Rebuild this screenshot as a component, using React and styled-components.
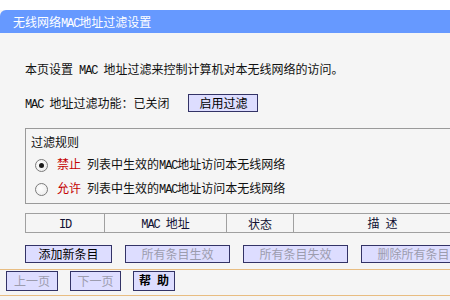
import React from "react";
import styled, { createGlobalStyle } from "styled-components";

const GlobalStyle = createGlobalStyle`
  html, body { margin: 0; padding: 0; background: #f5f5f5; overflow: hidden; }
  body {
    font-family: "Noto Sans CJK SC", "Noto Sans", sans-serif;
    font-size: 12px;
    color: #111;
  }
`;

const Page = styled.div`
  width: 450px;
  overflow: hidden;
  border-top: 10px solid #ffffff;
  background: #f5f5f5;
`;

const TitleBar = styled.div`
  height: 23px;
  line-height: 23px;
  background: #6699ff;
  border-top-left-radius: 6px;
  color: #ffffff;
  padding-left: 13px;
  font-size: 12px;
`;

const Latin = styled.span`
  font-family: "Liberation Mono", monospace;
  font-size: 12px;
  letter-spacing: -1.1px;
  white-space: pre;
`;

const Content = styled.div`
  padding: 26px 0 0 25px;
`;

const Intro = styled.div`
  line-height: 20px;
  white-space: nowrap;
`;

const FilterRow = styled.div`
  display: flex;
  align-items: center;
  height: 19px;
  margin-top: 12px;
  gap: 19px;
  white-space: nowrap;
`;

const Button = styled.button`
  box-sizing: border-box;
  height: ${(p) => p.$h || 18}px;
  width: ${(p) => p.$w}px;
  padding: 0;
  flex: none;
  font-family: "Noto Sans CJK SC", sans-serif;
  font-size: 12px;
  font-weight: ${(p) => (p.$bold ? 700 : 400)};
  line-height: 16px;
  background: #ddddff;
  border: 1px solid #333366;
  border-radius: 0;
  color: ${(p) => (p.disabled ? "#9c9cae" : "#000")};
  white-space: pre;
`;

const RuleBox = styled.div`
  width: 460px;
  margin-top: 16px;
  border: 1px solid #9a9a9a;
  border-right: none;
  padding: 2px 0;
`;

const Legend = styled.div`
  line-height: 22px;
  padding-left: 5px;
`;

const RadioRow = styled.div`
  height: 24px;
  display: flex;
  align-items: center;
  padding-left: 9px;
  white-space: nowrap;
`;

const RadioCircle = styled.span`
  box-sizing: border-box;
  flex: none;
  width: 13px;
  height: 13px;
  border-radius: 50%;
  border: 1px solid #7b7b7b;
  background: radial-gradient(circle at 40% 40%, #ffffff 0%, #e8e8e8 100%);
  margin-right: 9px;
  display: flex;
  align-items: center;
  justify-content: center;
  &::after {
    content: "";
    display: ${(p) => (p.$checked ? "block" : "none")};
    width: 5px;
    height: 5px;
    border-radius: 50%;
    background: #1a1a1a;
  }
`;

const RadioText = styled.span`
  line-height: 20px;
`;

const Red = styled.span`
  color: #c40000;
  margin-right: 6px;
`;

const Table = styled.table`
  margin-top: 9px;
  border-collapse: collapse;
  table-layout: fixed;
  width: 446px;
`;

const Th = styled.th`
  height: 17px;
  padding: 0;
  border: 1px solid #a0a0a0;
  font-weight: 400;
  font-size: 12px;
  color: #111133;
  text-align: center;
  white-space: pre;
`;

const ButtonRow = styled.div`
  display: flex;
  gap: 13px;
  margin-top: 12px;
`;

const Footer = styled.div`
  margin-top: 6px;
  border-top: 1px solid #e8bd82;
  border-bottom: 1px solid #e8bd82;
  padding: 1px 0 4px 6px;
  display: flex;
  gap: 12px;
`;

export default function App() {
  return (
    <>
      <GlobalStyle />
      <Page>
        <TitleBar>
          无线网络<Latin>MAC</Latin>地址过滤设置
        </TitleBar>
        <Content>
          <Intro>
            本页设置<Latin> MAC </Latin>地址过滤来控制计算机对本无线网络的访问。
          </Intro>
          <FilterRow>
            <span>
              <Latin>MAC </Latin>地址过滤功能：已关闭
            </span>
            <Button $w={70}>启用过滤</Button>
          </FilterRow>
          <RuleBox>
            <Legend>过滤规则</Legend>
            <RadioRow>
              <RadioCircle $checked />
              <RadioText>
                <Red>禁止</Red>
                列表中生效的<Latin>MAC</Latin>地址访问本无线网络
              </RadioText>
            </RadioRow>
            <RadioRow>
              <RadioCircle />
              <RadioText>
                <Red>允许</Red>
                列表中生效的<Latin>MAC</Latin>地址访问本无线网络
              </RadioText>
            </RadioRow>
          </RuleBox>
          <Table>
            <colgroup>
              <col style={{ width: 79 }} />
              <col style={{ width: 122 }} />
              <col style={{ width: 67 }} />
              <col style={{ width: 178 }} />
            </colgroup>
            <thead>
              <tr>
                <Th>
                  <Latin>ID</Latin>
                </Th>
                <Th>
                  <Latin>MAC </Latin>地址
                </Th>
                <Th>状态</Th>
                <Th>
                  描<Latin> </Latin>述
                </Th>
              </tr>
            </thead>
          </Table>
          <ButtonRow>
            <Button $w={87}>添加新条目</Button>
            <Button $w={105} disabled>
              所有条目生效
            </Button>
            <Button $w={105} disabled>
              所有条目失效
            </Button>
            <Button $w={105} disabled>
              删除所有条目
            </Button>
          </ButtonRow>
        </Content>
        <Footer>
          <Button $w={52} $h={20} disabled>
            上一页
          </Button>
          <Button $w={51} $h={20} disabled>
            下一页
          </Button>
          <Button $w={42} $h={20} $bold>
            帮<Latin> </Latin>助
          </Button>
        </Footer>
      </Page>
    </>
  );
}
